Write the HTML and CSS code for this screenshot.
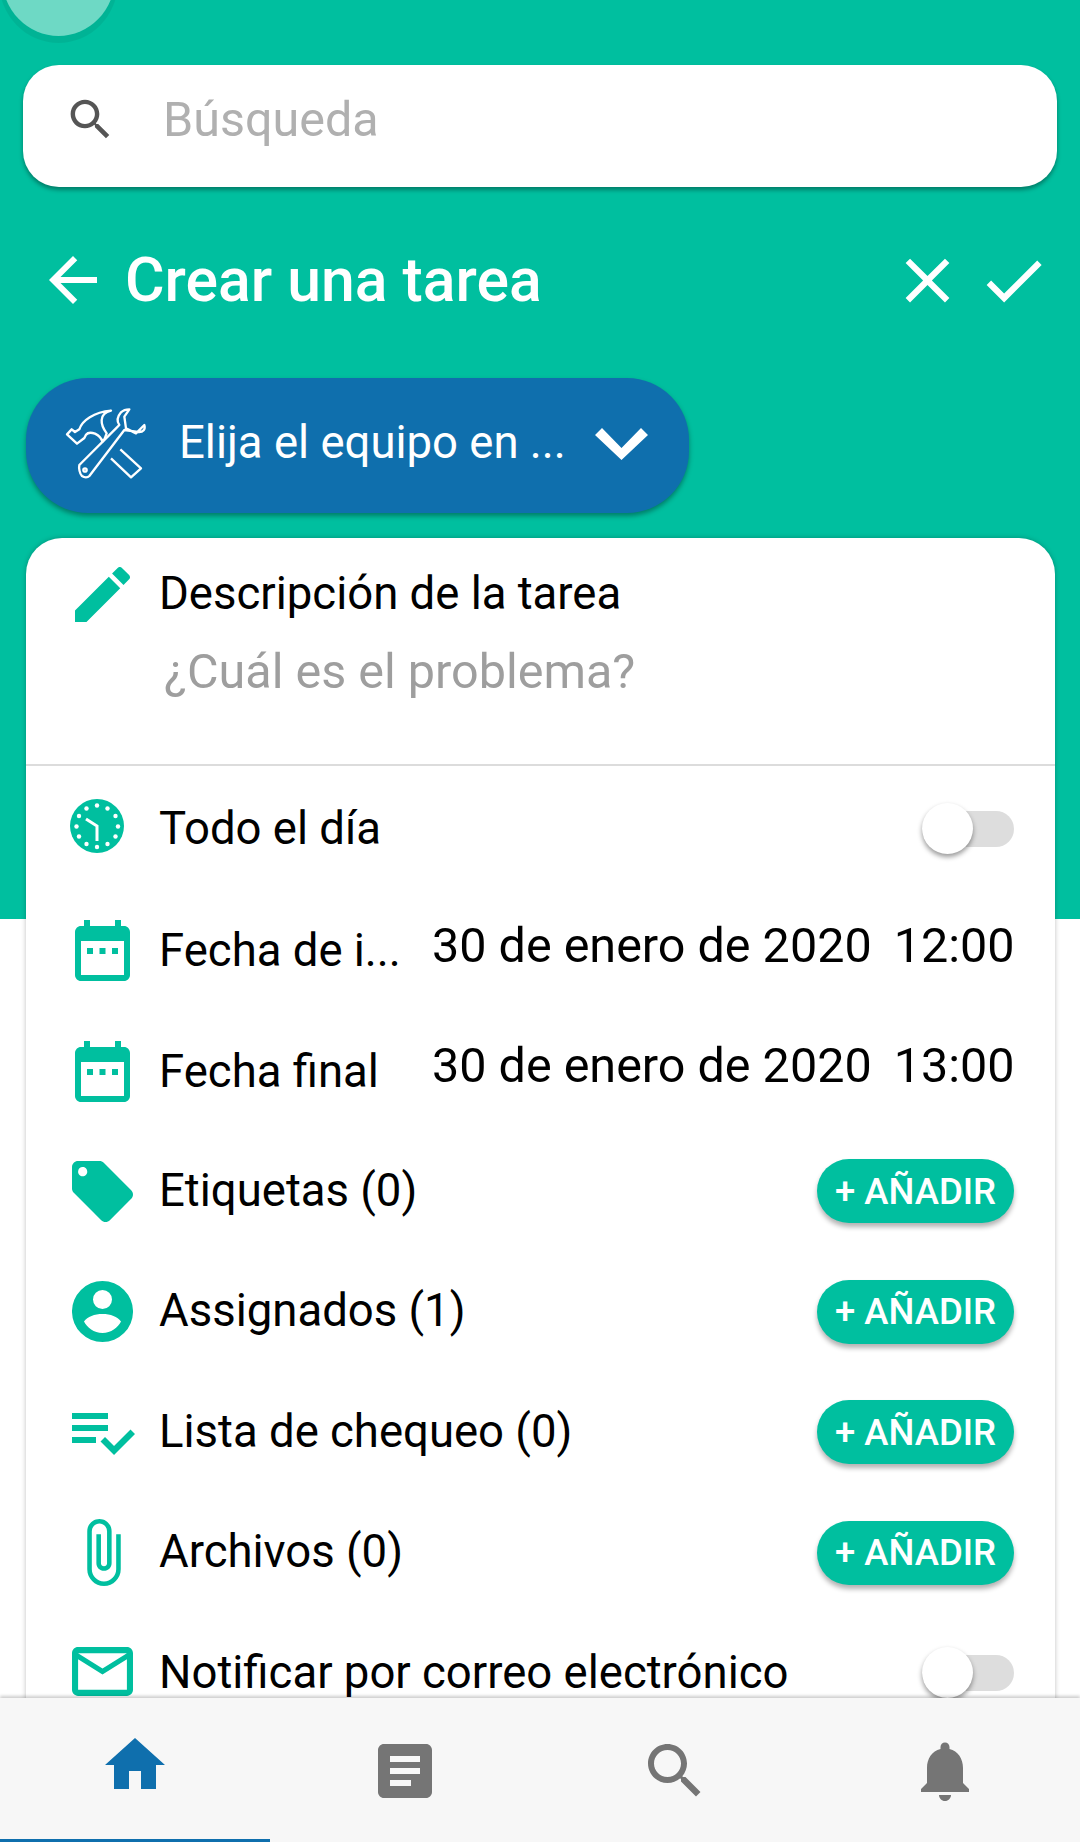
FILE: index.html
```html
<!DOCTYPE html>
<html lang="es">
<head>
  <meta charset="UTF-8">
  <meta name="viewport" content="width=device-width, initial-scale=1.0">
  <title>Crear una tarea</title>
  <link rel="stylesheet" href="styles.css">
</head>
<body>
  <div class="page">
    <div class="avatar"></div>

    <div class="search">
      <svg class="search-icon" viewBox="0 0 24 24"><path d="M15.5 14h-.79l-.28-.27C15.41 12.59 16 11.11 16 9.5 16 5.91 13.09 3 9.5 3S3 5.91 3 9.5 5.91 16 9.5 16c1.61 0 3.09-.59 4.23-1.57l.27.28v.79l5 4.99L20.49 19l-4.99-5zm-6 0C7.01 14 5 11.99 5 9.5S7.01 5 9.5 5 14 7.01 14 9.5 11.99 14 9.5 14z"/></svg>
      <span class="search-text">Búsqueda</span>
    </div>

    <div class="titlebar">
      <svg class="back" viewBox="0 0 24 24"><path d="M20 11H7.83l5.59-5.59L12 4l-8 8 8 8 1.41-1.41L7.83 13H20v-2z"/></svg>
      <h1>Crear una tarea</h1>
      <svg class="action" viewBox="0 0 24 24"><path d="M19 6.41L17.59 5 12 10.59 6.41 5 5 6.41 10.59 12 5 17.59 6.41 19 12 13.41 17.59 19 19 17.59 13.41 12z"/></svg>
      <svg class="action" viewBox="0 0 24 24"><path d="M9 16.17L4.83 12l-1.42 1.41L9 19 21 7l-1.41-1.41z"/></svg>
    </div>

    <div class="equipo">
      <svg class="tools" viewBox="0 0 285 255" fill="none" stroke="#fff" stroke-width="7" stroke-linejoin="round">
        <path d="M18 103l14-15 10 8 13-8c8-26 44-52 95-56-18 4-27 14-28 28-1 14 6 28 15 40l-7 18-6 7c-2-9-10-18-22-24-11-4-22-3-27 3l-5 10-22 17z"/>
        <path d="M150 175l60 57 30-27-62-57"/>
        <path d="M55 195L165 85l10-10c-6-8-10-20 5-38 8-8 18-9 25-9l-15 22 5 35 30 15 25-25c3 10 0 25-25 20l-35-5L85 228c-5 5-15 5-22 0-7-6-10-24-8-33z"/>
        <circle cx="72" cy="210" r="5"/>
      </svg>
      <span class="equipo-text">Elija el equipo en ...</span>
      <svg class="chevron" viewBox="0 0 53 32"><path d="M0 7l7-7 19.5 20L46 0l7 7-26.5 25z"/></svg>
    </div>

    <div class="card">
      <div class="desc">
        <svg class="icon pencil" viewBox="3 3 18 18"><path d="M3 17.25V21h3.75L17.81 9.94l-3.75-3.75L3 17.25zM20.71 7.04c.39-.39.39-1.02 0-1.41l-2.34-2.34c-.39-.39-1.02-.39-1.41 0l-1.83 1.83 3.75 3.75 1.83-1.83z"/></svg>
        <div>
          <div class="label">Descripción de la tarea</div>
          <div class="hint">¿Cuál es el problema?</div>
        </div>
      </div>

      <div class="row row-first">
        <span class="icon-box">
          <svg class="icon clock" viewBox="0 0 54 54">
            <circle cx="27" cy="27" r="27"/>
            <g fill="#fff">
              <circle cx="27" cy="6.5" r="2.2"/><circle cx="37.5" cy="9.5" r="2.2"/><circle cx="45.5" cy="17" r="2.2"/>
              <circle cx="48" cy="27.5" r="2.2"/><circle cx="45.5" cy="37.5" r="2.2"/><circle cx="37.5" cy="45" r="2.2"/>
              <circle cx="27" cy="48" r="2.2"/><circle cx="16.5" cy="45" r="2.2"/><circle cx="9" cy="37.5" r="2.2"/>
              <circle cx="6.5" cy="27.5" r="2.2"/><circle cx="9" cy="17" r="2.2"/><circle cx="16.5" cy="9.5" r="2.2"/>
            </g>
            <path d="M16 20l11 7v15" fill="none" stroke="#fff" stroke-width="3"/>
          </svg>
        </span>
        <span class="label row-label">Todo el día</span>
        <span class="switch"><span class="knob"></span></span>
      </div>

      <div class="row">
        <span class="icon-box">
          <svg class="icon cal" viewBox="0 0 55 61"><path d="M9 0h6v6h25V0h6v6h3c3.3 0 6 2.7 6 6v43c0 3.3-2.7 6-6 6H6c-3.3 0-6-2.7-6-6V12c0-3.3 2.7-6 6-6h3zM6 21v34h43V21zM12 28h6v6h-6zM24.5 28h6v6h-6zM37 28h6v6h-6z" fill-rule="evenodd"/></svg>
        </span>
        <span class="label row-label clipped low">Fecha de i...</span>
        <span class="value">30 de enero de 2020</span>
        <span class="value time">12:00</span>
      </div>

      <div class="row">
        <span class="icon-box">
          <svg class="icon cal" viewBox="0 0 55 61"><path d="M9 0h6v6h25V0h6v6h3c3.3 0 6 2.7 6 6v43c0 3.3-2.7 6-6 6H6c-3.3 0-6-2.7-6-6V12c0-3.3 2.7-6 6-6h3zM6 21v34h43V21zM12 28h6v6h-6zM24.5 28h6v6h-6zM37 28h6v6h-6z" fill-rule="evenodd"/></svg>
        </span>
        <span class="label row-label clipped low">Fecha final</span>
        <span class="value">30 de enero de 2020</span>
        <span class="value time">13:00</span>
      </div>

      <div class="row">
        <span class="icon-box">
          <svg class="icon wide" viewBox="2 2 20 20"><path d="M21.41 11.58l-9-9C12.05 2.22 11.55 2 11 2H4c-1.1 0-2 .9-2 2v7c0 .55.22 1.05.59 1.42l9 9c.36.36.86.58 1.41.58.55 0 1.05-.22 1.41-.59l7-7c.37-.36.59-.86.59-1.41 0-.55-.23-1.06-.59-1.42zM5.5 7C4.67 7 4 6.33 4 5.5S4.67 4 5.5 4 7 4.67 7 5.5 6.33 7 5.5 7z"/></svg>
        </span>
        <span class="label row-label">Etiquetas (0)</span>
        <button class="add">+ AÑADIR</button>
      </div>

      <div class="row">
        <span class="icon-box">
          <svg class="icon wide" viewBox="0 0 61 61">
            <path fill-rule="evenodd" d="M30.5 0a30.5 30.5 0 1 0 0 61a30.5 30.5 0 1 0 0-61zM30.5 9a9.5 9.5 0 1 1 0 19a9.5 9.5 0 1 1 0-19zM30.5 33c8 0 15 2.5 18.5 7.5-3 6-10 11.5-18.500 11.5S15 46.5 12 40.5C15.5 35.5 22.5 33 30.5 33z"/>
          </svg>
        </span>
        <span class="label row-label">Assignados (1)</span>
        <button class="add">+ AÑADIR</button>
      </div>

      <div class="row">
        <span class="icon-box">
          <svg class="icon list" viewBox="2 6 21 14"><path d="M14 10H2v2h12v-2zm0-4H2v2h12V6zM2 16h8v-2H2v2zm19.5-4.5L23 13l-6.99 7-4.51-4.5L13 14l3.01 3 5.49-5.5z"/></svg>
        </span>
        <span class="label row-label">Lista de chequeo (0)</span>
        <button class="add">+ AÑADIR</button>
      </div>

      <div class="row">
        <span class="icon-box">
          <svg class="icon clip" viewBox="7 1 11 22"><path d="M16.5 6v11.5c0 2.21-1.79 4-4 4s-4-1.79-4-4V5c0-1.38 1.12-2.5 2.5-2.5s2.5 1.12 2.5 2.5v10.5c0 .55-.45 1-1 1s-1-.45-1-1V6H10v9.5c0 1.38 1.12 2.5 2.5 2.5s2.5-1.12 2.5-2.5V5c0-2.21-1.79-4-4-4S7 2.79 7 5v12.5c0 3.04 2.46 5.5 5.5 5.5s5.5-2.46 5.5-5.5V6h-1.5z"/></svg>
        </span>
        <span class="label row-label">Archivos (0)</span>
        <button class="add">+ AÑADIR</button>
      </div>

      <div class="row">
        <span class="icon-box">
          <svg class="icon mail" viewBox="2 4 20 16"><path d="M20 4H4c-1.1 0-2 .9-2 2v12c0 1.1.9 2 2 2h16c1.1 0 2-.9 2-2V6c0-1.1-.9-2-2-2zm0 14H4V8l8 5 8-5v10zm-8-7L4 6h16l-8 5z"/></svg>
        </span>
        <span class="label row-label">Notificar por correo electrónico</span>
        <span class="switch"><span class="knob"></span></span>
      </div>
    </div>

    <nav class="bottom">
      <div class="tab tab-on"><svg class="tab-home" viewBox="0 0 24 24"><path d="M10 20v-6h4v6h5v-8h3L12 3 2 12h3v8z"/></svg></div>
      <div class="tab"><svg viewBox="0 0 24 24"><path d="M19 3H5c-1.1 0-2 .9-2 2v14c0 1.1.9 2 2 2h14c1.1 0 2-.9 2-2V5c0-1.1-.9-2-2-2zm-5 14H7v-2h7v2zm3-4H7v-2h10v2zm0-4H7V7h10v2z"/></svg></div>
      <div class="tab"><svg viewBox="0 0 24 24"><path d="M15.5 14h-.79l-.28-.27C15.41 12.59 16 11.11 16 9.5 16 5.91 13.09 3 9.5 3S3 5.91 3 9.5 5.91 16 9.5 16c1.61 0 3.09-.59 4.23-1.57l.27.28v.79l5 4.99L20.49 19l-4.99-5zm-6 0C7.01 14 5 11.99 5 9.5S7.01 5 9.5 5 14 7.01 14 9.5 11.99 14 9.5 14z"/></svg></div>
      <div class="tab"><svg viewBox="0 0 24 24"><path d="M12 22c1.1 0 2-.9 2-2h-4c0 1.1.89 2 2 2zm6-6v-5c0-3.07-1.64-5.64-4.5-6.32V4c0-.83-.67-1.5-1.5-1.5s-1.5.67-1.5 1.500v.68C7.63 5.36 6 7.92 6 11v5l-2 2v1h16v-1l-2-2z"/></svg></div>
    </nav>
  </div>
</body>
</html>
```

FILE: styles.css
```css
* {
  box-sizing: border-box;
}
html, body {
  margin: 0;
  padding: 0;
}
body {
  font-family: Roboto, sans-serif;
  background: #fff;
}
.page {
  position: relative;
  width: 1080px;
  height: 1842px;
  overflow: hidden;
  padding-top: 65px;
  background: linear-gradient(#00bf9f 919px, #fff 919px);
}
.avatar {
  position: absolute;
  left: 2px;
  top: -81px;
  width: 113px;
  height: 117px;
  border-radius: 50%;
  background: #6ed9c5;
  box-shadow: 0 4px 0 3px rgba(0, 0, 0, 0.06);
}
.search {
  display: flex;
  align-items: center;
  height: 122px;
  margin: 0 23px;
  padding-left: 41px;
  border-radius: 36px;
  background: #fff;
  box-shadow: 0 3px 4px rgba(0, 0, 0, 0.35);
}
.search-icon {
  width: 53px;
  height: 53px;
  fill: #555;
  margin-right: 46px;
  margin-bottom: 14px;
}
.search-text {
  font-size: 48.5px;
  color: #b0b0b0;
  margin-bottom: 14px;
}
.titlebar {
  display: flex;
  align-items: center;
  height: 70px;
  margin-top: 58px;
  padding-left: 37px;
  padding-right: 29px;
}
.back {
  width: 72px;
  height: 72px;
  fill: #fff;
  flex: none;
}
.titlebar h1 {
  flex: 1;
  margin: 0 0 0 16px;
  font-size: 60.7px;
  font-weight: 500;
  color: #fff;
}
.action {
  width: 75px;
  height: 75px;
  fill: #fff;
  margin-left: 11px;
}
.equipo {
  display: flex;
  align-items: center;
  width: 663px;
  height: 135px;
  margin: 63px 0 0 26px;
  padding-left: 35px;
  border-radius: 62px;
  background: #0f6fad;
  box-shadow: 0 3px 5px rgba(0, 0, 0, 0.35);
}
.tools {
  width: 95px;
  height: 85px;
  flex: none;
  margin-bottom: 6px;
}
.equipo-text {
  margin-left: 23px;
  margin-bottom: 6px;
  font-size: 45.5px;
  color: #fff;
  white-space: nowrap;
}
.chevron {
  width: 53px;
  height: 32px;
  fill: #fff;
  margin-left: 29px;
  margin-bottom: 3px;
}
.card {
  height: 1304px;
  margin: 25px 25px 0 26px;
  border-radius: 36px 36px 0 0;
  background: #fff;
  box-shadow: 0 0 5px rgba(0, 0, 0, 0.25);
}
.icon {
  fill: #00bf9f;
  display: block;
}
.desc {
  display: flex;
  height: 228px;
  padding: 29px 0 0 49px;
  border-bottom: 2px solid #dcdcdc;
}
.pencil {
  width: 55px;
  height: 55px;
  margin-right: 29px;
  flex: none;
}
.label {
  font-size: 45.5px;
  color: #000;
  line-height: 54px;
}
.hint {
  margin-top: 24px;
  margin-left: 5px;
  font-size: 48.5px;
  line-height: 54px;
  color: #9e9e9e;
}
.row {
  display: flex;
  align-items: center;
  height: 120.4px;
  padding-right: 41px;
}
.row-first {
  height: 123px;
}
.icon-box {
  display: flex;
  justify-content: center;
  align-items: center;
  width: 75px;
  margin-left: 39px;
  flex: none;
}
.clock {
  width: 54px;
  height: 54px;
  margin: 0 11px 3px 0;
}
.cal {
  width: 55px;
  height: 61px;
  margin-top: 3px;
}
.wide {
  width: 61px;
  height: 61px;
  margin-top: 3px;
}
.list {
  width: 63px;
  height: 42px;
  margin: 6px 0 0 2px;
}
.clip {
  width: 34px;
  height: 67px;
  margin: 3px 0 0 3px;
}
.mail {
  width: 61px;
  height: 49px;
}
.row-label {
  flex: 1;
  margin-left: 19px;
  margin-top: 2px;
  white-space: nowrap;
}
.clipped {
  flex: none;
  width: 273px;
}
.low {
  margin-top: 4px;
}
.value {
  font-size: 48.5px;
  color: #000;
  white-space: nowrap;
  margin-bottom: 8px;
}
.time {
  margin-left: 22px;
}
.switch {
  position: relative;
  display: block;
  width: 92px;
  height: 36px;
  margin-top: 3px;
  border-radius: 18px;
  background: #ddd;
}
.knob {
  position: absolute;
  left: 0;
  top: -8px;
  width: 51px;
  height: 51px;
  border-radius: 50%;
  background: #fff;
  box-shadow: 0 3px 5px rgba(0, 0, 0, 0.4);
}
.add {
  width: 197px;
  height: 64px;
  margin-top: 3px;
  border: none;
  border-radius: 32px;
  padding: 0;
  background: #00bf9f;
  color: #fff;
  font-family: Roboto, sans-serif;
  font-size: 36.5px;
  font-weight: 500;
  box-shadow: 0 4px 5px rgba(0, 0, 0, 0.3);
}
.bottom {
  position: absolute;
  left: 0;
  right: 0;
  bottom: 0;
  height: 144px;
  display: flex;
  background: #f7f7f7;
  box-shadow: 0 -2px 3px rgba(0, 0, 0, 0.2);
}
.tab {
  flex: 1;
  display: flex;
  justify-content: center;
  align-items: center;
  padding-top: 4px;
  border-bottom: 3px solid transparent;
}
.tab svg {
  width: 72px;
  height: 72px;
  fill: #757575;
}
.tab-on {
  border-bottom-color: #0f6fad;
}
.tab svg.tab-home {
  fill: #0f6fad;
  margin-bottom: 12px;
}
```
